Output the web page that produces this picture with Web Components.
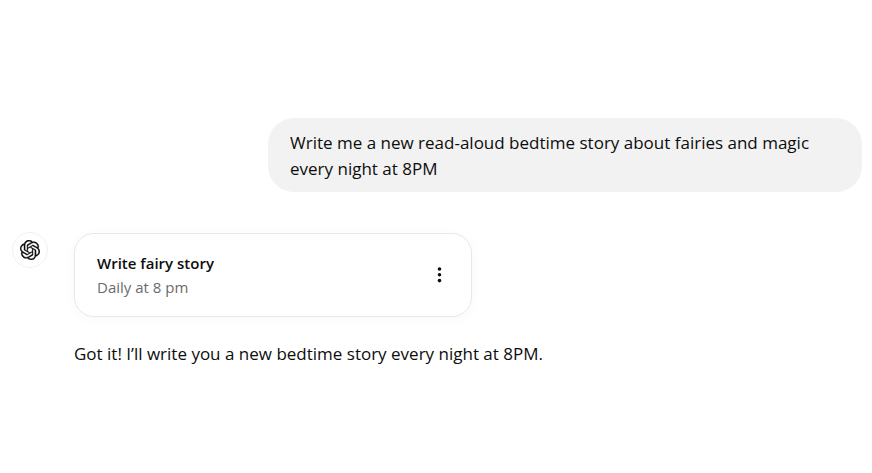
<!DOCTYPE html>
<html lang="en">
<head>
<meta charset="utf-8">
<meta name="viewport" content="width=device-width, initial-scale=1">
<title>Scheduled task chat</title>
<style>
  body { margin: 0; background: #fff; color: #0d0d0d; font: 17px/26px "Open Sans", "Noto Sans", sans-serif; }
</style>
</head>
<body>
<chat-thread>
  <user-message>Write me a new read-aloud bedtime story about fairies and magic every night at 8PM</user-message>
  <assistant-message>
    <task-card>
      <span slot="title">Write fairy story</span>
      <span slot="schedule">Daily at 8 pm</span>
    </task-card>
    <span slot="reply">Got it! I’ll write you a new bedtime story every night at 8PM.</span>
  </assistant-message>
</chat-thread>

<template id="chat-thread">
  <style>
    :host { display: block; }
    main { display: flex; flex-direction: column; gap: 40px; padding: 118px 10px 24px 12px; }
  </style>
  <main><slot></slot></main>
</template>

<template id="user-message">
  <style>
    :host { display: flex; justify-content: flex-end; }
    p { box-sizing: border-box; max-width: 594px; margin: 0; padding: 12px 22px 10px; border-radius: 26px; background: #f2f2f2; }
  </style>
  <p><slot></slot></p>
</template>

<template id="assistant-message">
  <style>
    :host { display: flex; align-items: flex-start; gap: 26px; }
    .body { flex: 1; min-width: 0; padding-top: 1px; }
    p { margin: 24px 0 0; }
  </style>
  <brand-avatar></brand-avatar>
  <div class="body">
    <slot></slot>
    <p><slot name="reply"></slot></p>
  </div>
</template>

<template id="brand-avatar">
  <style>
    :host { display: flex; flex: none; align-items: center; justify-content: center; box-sizing: border-box; width: 36px; height: 36px; border: 1px solid #f0f0f0; border-radius: 50%; }
    svg { display: block; width: 20px; height: 20px; }
  </style>
  <svg viewBox="0 0 24 24" fill="#0d0d0d" stroke="#0d0d0d" stroke-width=".3" role="img" aria-label="Assistant"><path d="M22.2819 9.8211a5.9847 5.9847 0 0 0-.5157-4.9108 6.0462 6.0462 0 0 0-6.5098-2.9A6.0651 6.0651 0 0 0 4.9807 4.1818a5.9847 5.9847 0 0 0-3.9977 2.9 6.0462 6.0462 0 0 0 .7427 7.0966 5.98 5.98 0 0 0 .511 4.9107 6.051 6.051 0 0 0 6.5146 2.9001A5.9847 5.9847 0 0 0 13.2599 24a6.0557 6.0557 0 0 0 5.7718-4.2058 5.9894 5.9894 0 0 0 3.9977-2.9001 6.0557 6.0557 0 0 0-.7475-7.0729zm-9.022 12.6081a4.4755 4.4755 0 0 1-2.8764-1.0408l.1419-.0804 4.7783-2.7582a.7948.7948 0 0 0 .3927-.6813v-6.7369l2.02 1.1686a.071.071 0 0 1 .038.052v5.5826a4.504 4.504 0 0 1-4.4945 4.4944zm-9.6607-4.1254a4.4708 4.4708 0 0 1-.5346-3.0137l.142.0852 4.783 2.7582a.7712.7712 0 0 0 .7806 0l5.8428-3.3685v2.3324a.0804.0804 0 0 1-.0332.0615L9.74 19.9502a4.4992 4.4992 0 0 1-6.1408-1.6464zM2.3408 7.8956a4.485 4.485 0 0 1 2.3655-1.9728V11.6a.7664.7664 0 0 0 .3879.6765l5.8144 3.3543-2.0201 1.1685a.0757.0757 0 0 1-.071 0l-4.8303-2.7865A4.504 4.504 0 0 1 2.3408 7.872zm16.5963 3.8558L13.1038 8.364 15.1192 7.2a.0757.0757 0 0 1 .071 0l4.8303 2.7913a4.4944 4.4944 0 0 1-.6765 8.1042v-5.6772a.79.79 0 0 0-.407-.667zm2.0107-3.0231l-.142-.0852-4.7735-2.7818a.7759.7759 0 0 0-.7854 0L9.409 9.2297V6.8974a.0662.0662 0 0 1 .0284-.0615l4.8303-2.7866a4.4992 4.4992 0 0 1 6.6802 4.66zM8.3065 12.863l-2.02-1.1638a.0804.0804 0 0 1-.038-.0567V6.0742a4.4992 4.4992 0 0 1 7.3757-3.4537l-.142.0805L8.704 5.459a.7948.7948 0 0 0-.3927.6813zm1.0976-2.3654l2.602-1.4998 2.6069 1.4998v2.9994l-2.5974 1.4997-2.6067-1.4997Z"/></svg>
</template>

<template id="task-card">
  <style>
    :host { display: flex; align-items: center; justify-content: space-between; gap: 16px; box-sizing: border-box; max-width: 398px; padding: 17px 22px; border: 1px solid #e8e8e8; border-radius: 20px; background: #fff; box-shadow: 0 2px 12px rgba(0, 0, 0, .03); }
    .text { min-width: 0; font-size: 15px; line-height: 24px; }
    .title { font-weight: 600; color: #0d0d0d; }
    .schedule { color: #6b6b6b; }
    button { display: flex; align-items: center; justify-content: center; flex: none; width: 20px; height: 32px; padding: 0; border: 0; border-radius: 8px; background: none; color: #0d0d0d; cursor: pointer; }
    svg { display: block; width: 20px; height: 20px; }
  </style>
  <div class="text">
    <div class="title"><slot name="title"></slot></div>
    <div class="schedule"><slot name="schedule"></slot></div>
  </div>
  <button type="button" aria-label="Task options"><svg viewBox="0 0 20 20" fill="currentColor" aria-hidden="true"><circle cx="10.5" cy="4" r="1.8"/><circle cx="10.5" cy="9.8" r="1.8"/><circle cx="10.5" cy="15.6" r="1.8"/></svg></button>
</template>

<script>
  class TemplateElement extends HTMLElement {
    constructor() {
      super();
      const template = document.getElementById(this.localName);
      this.attachShadow({ mode: "open" }).append(template.content.cloneNode(true));
    }
  }
  customElements.define("brand-avatar", class extends TemplateElement {});
  customElements.define("task-card", class extends TemplateElement {});
  customElements.define("assistant-message", class extends TemplateElement {});
  customElements.define("user-message", class extends TemplateElement {});
  customElements.define("chat-thread", class extends TemplateElement {});
</script>
</body>
</html>
